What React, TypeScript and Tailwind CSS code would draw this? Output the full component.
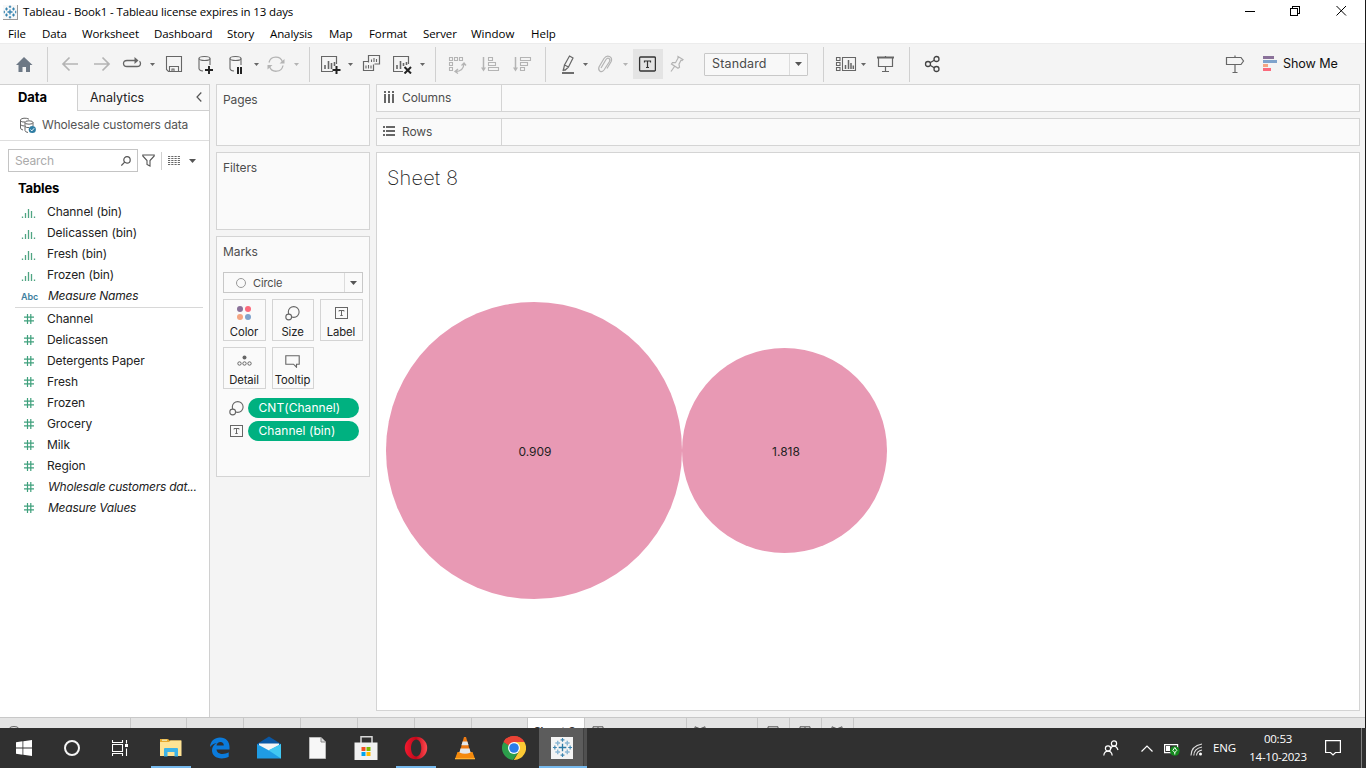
import React from "react";

type P = { children?: React.ReactNode; className?: string };

/* 20x20 stroke icon used throughout the toolbar */
function Ico({ children, className = "" }: P) {
  return (
    <svg viewBox="0 0 20 20" className={"h-5 w-5 shrink-0 " + className} fill="none" stroke="currentColor" strokeWidth="1.1">
      {children}
    </svg>
  );
}
function Caret({ className = "" }: P) {
  return (
    <svg viewBox="0 0 5 3" className={"h-[3px] w-[5px] shrink-0 " + className} fill="currentColor">
      <path d="M0 0h5L2.5 3z" />
    </svg>
  );
}
function Divider({ className = "" }: P) {
  return <div className={"h-[35px] w-px shrink-0 bg-[#d0d0d0] " + className} />;
}

const DIM = "text-[#b4b4b4]";

function TableauMark({ className = "" }: P) {
  return (
    <svg viewBox="0 0 22 22" className={className} fill="none" strokeWidth="1.2">
      <path d="M11 7v8M7 11h8" stroke="#2e7ba6" strokeWidth="1.4" />
      <path d="M6 3.800v5M3.500 6.300h5M16 3.800v5M13.500 6.300h5M6 13.200v5M3.500 15.700h5M16 13.200v5M13.500 15.700h5" stroke="#8ab6d3" strokeWidth="1.500" />
      <path d="M11 1v4M9 3h4M11 17v4M9 19h4M3 9v4M1 11h4M19 9v4M17 11h4" stroke="#3f86b0" />
    </svg>
  );
}

function TitleBar() {
  return (
    <div className="flex h-6 shrink-0 items-center bg-white font-['Open_Sans','Noto_Sans',sans-serif] text-[11.5px] text-black">
      <div className="ml-[3px] flex h-[15px] w-[15px] items-center justify-center border-b border-r border-[#999] bg-[#f8f8f8]">
        <svg viewBox="0 0 14 14" className="h-[14px] w-[14px]" fill="none" stroke="#3583b0" strokeWidth="1.1">
          <path d="M7 4.500v5M4.500 7h5" strokeWidth="1.300" />
          <path d="M3.500 2.500v3M2 4h3M10.500 2.500v3M9 4h3M3.500 8.500v3M2 10h3M10.500 8.500v3M9 10h3M7 .5v2.500M5.800 1.700h2.400M7 11v2.500M5.800 12.300h2.400M1.300 5.800v2.400M12.700 5.800v2.400" />
        </svg>
      </div>
      <span className="ml-[5px] whitespace-nowrap tracking-[-0.13px]">Tableau - Book1 - Tableau license expires in 13 days</span>
      <svg viewBox="0 0 102 12" className="ml-auto mr-[18px] mb-[3px] h-3 w-[102px]" fill="none" stroke="#000" shapeRendering="crispEdges">
        <path d="M0 6.500h10" />
        <path d="M45.500 3.500h7v7h-7zM47.500 3V1.500h7v7H53" />
        <path d="M91.500 1l9.500 9.500M101 1l-9.500 9.500" shapeRendering="auto" />
      </svg>
    </div>
  );
}

function Menu() {
  return (
    <div className="flex h-[19px] shrink-0 items-center whitespace-nowrap bg-white pl-2 font-['Open_Sans','Noto_Sans',sans-serif] text-[11.5px] tracking-[-0.1px] text-black">
      <span className="w-[34px]">File</span>
      <span className="w-[40px]">Data</span>
      <span className="w-[72px]">Worksheet</span>
      <span className="w-[73px]">Dashboard</span>
      <span className="w-[43px]">Story</span>
      <span className="w-[59px]">Analysis</span>
      <span className="w-[40px]">Map</span>
      <span className="w-[54px]">Format</span>
      <span className="w-[48px]">Server</span>
      <span className="w-[60px] tracking-[0px]">Window</span>
      <span className="tracking-[0px]">Help</span>
    </div>
  );
}

function Toolbar() {
  return (
    <div className="flex h-[41px] shrink-0 items-center border-t border-[#ececec] bg-[#f4f4f4] text-[#666]">
      <Ico className="ml-[14px] text-[#6d7885]">
        <path d="M10 3l8.500 8H16v7h-4v-5H8.500v5H4.500v-7H2z" fill="currentColor" stroke="none" />
      </Ico>
      <Divider className="ml-[13px]" />
      <Ico className="ml-3 text-[#b4b4b4]"><path d="M18 10H3M9.500 3.500L3 10 9.500 16.500" strokeWidth="1.700" /></Ico>
      <Ico className="ml-3 text-[#b4b4b4]"><path d="M2 10h15M10.500 3.500l6.500 6.500-6.500 6.500" strokeWidth="1.700" /></Ico>
      <Ico className="ml-[10px]">
        <path d="M15 6.500H5Q1.500 6.500 1.500 9.500T5 12.500h10q3.500 0 3.500-3 0-1.500-1-2.200" strokeWidth="1.300" />
        <path d="M12.500 3L16.500 6.500l-4 3.500z" fill="currentColor" stroke="none" />
      </Ico>
      <Caret className="ml-2" />
      <Ico className="ml-[9px]"><path d="M2.500 2.500h15v15H4.500l-2-2zM5.500 17.500v-5h9v5M8 17.500V15h2v2.500" /></Ico>
      <Ico className="ml-3">
        <ellipse cx="8.500" cy="4.500" rx="5.500" ry="2" />
        <path d="M3 4.500v10q0 2 4 2.500M14 4.500V11" />
        <path d="M13 12v8M9 16h8" stroke="#222" strokeWidth="1.900" />
      </Ico>
      <Ico className="ml-[11px]">
        <ellipse cx="8.500" cy="4.500" rx="5.500" ry="2" />
        <path d="M3 4.500v10q0 2 4 2.500M14 4.500V11" />
        <path d="M11 13v7M14 13v7" stroke="#222" strokeWidth="2" />
      </Ico>
      <Caret className="ml-[7px]" />
      <Ico className="ml-[7px] text-[#b4b4b4]">
        <path d="M3 8.500A7 7 0 0 1 16.500 8M17 11.500A7 7 0 0 1 3.500 12.500" strokeWidth="1.300" />
        <path d="M18.500 5v4.500h-5zM1.500 15.500V11h5z" fill="currentColor" stroke="none" />
      </Ico>
      <Caret className="ml-2 text-[#b4b4b4]" />
      <Divider className="ml-[10px]" />
      <Ico className="ml-[11px]">
        <path d="M15.500 10V2.500H.5v15H12" strokeWidth="1.200" />
        <path d="M4 15v-4M7.500 15V7M10.500 15V9M13.500 12V8" strokeWidth="1.600" />
        <path d="M15.500 12v8M11.500 16h8" stroke="#222" strokeWidth="2" />
      </Ico>
      <Caret className="ml-[7px]" />
      <Ico className="ml-2">
        <path d="M7.500 8.500V1.500h11v8.500h-5M7 7.500H2.500v9h10v-6" strokeWidth="1.200" />
        <path d="M10.500 8V5.500M13 8V4M15.500 8V5M5 14.500v-3M7.500 14.500V11M10 14.500v-3" />
      </Ico>
      <Ico className="ml-3">
        <path d="M15.500 10V2.500H.5v15H10" strokeWidth="1.200" />
        <path d="M4 15v-4M7.500 15V7M10.500 12V9M13.500 11V8" strokeWidth="1.600" />
        <path d="M11.500 13l6.500 6.500M18 13l-6.500 6.500" stroke="#222" strokeWidth="2" />
      </Ico>
      <Caret className="ml-[7px]" />
      <Divider className="ml-[10px]" />
      <Ico className={"ml-3 " + DIM}>
        <path d="M1.500 3.500h3v3h-3zM6.500 3.500h3v3h-3zM11.500 3.500h3v3h-3zM1.500 8.500h3v3h-3zM1.500 13.500h3v3h-3z" />
        <path d="M7.500 17.500q8 0 8.500-8M10 15l-3 2.500 3 2M13.500 11.500L16 9l2 2.500" strokeWidth="1.300" />
      </Ico>
      <Ico className={"ml-3 " + DIM}>
        <path d="M3.500 3v12" strokeWidth="1.500" />
        <path d="M1 13.500h5L3.500 17.500z" fill="currentColor" stroke="none" />
        <path d="M8.500 3.500h4v3h-4zM8.500 8.500h7v3h-7zM8.500 13.500h10v3h-10z" />
      </Ico>
      <Ico className={"ml-3 " + DIM}>
        <path d="M3.500 3v12" strokeWidth="1.500" />
        <path d="M1 13.500h5L3.500 17.500z" fill="currentColor" stroke="none" />
        <path d="M8.500 3.500h10v3h-10zM8.500 8.500h7v3h-7zM8.500 13.500h4v3h-4z" />
      </Ico>
      <Divider className="ml-[13px]" />
      <Ico className="ml-3">
        <path d="M11.500 2l3.500 2-4.500 9-4-2zM6.500 11L5.500 15.500 7 16.200 10.500 13M5.500 15l-.500 2" strokeWidth="1.200" />
        <path d="M4 19h12" strokeWidth="1.900" />
      </Ico>
      <Caret className="ml-[5px]" />
      <Ico className={"ml-[7px] " + DIM}>
        <path d="M6 14l5-8.500q1.500-2 3-1t.5 3L9 16q-2 2.500-4 1.200T4 13L9 4.500Q11.500 1 14.500 2.500t1.700 5L12 14.500" strokeWidth="1.200" />
      </Ico>
      <Caret className="ml-2 text-[#b4b4b4]" />
      <div className="ml-[5px] flex h-[30px] w-[30px] shrink-0 items-center justify-center bg-[#e4e4e4]">
        <svg viewBox="0 0 18 16" className="mr-[2px] h-4 w-[18px]" fill="none" stroke="#333">
          <rect x="1.600" y="1" width="15.800" height="14" rx="1" strokeWidth="1.300" />
          <path d="M6.500 6.500V5h6v1.500M9.500 5v6.500M8 11.500h3" strokeWidth="1.200" />
        </svg>
      </div>
      <Ico className={"ml-1 " + DIM}>
        <path d="M11 2.500l5 3-1 1-1-.3-2 4 .5 3-1.500 1L4.500 10l1-1.300 3 0 2.500-4.500zM7.500 12.500L4 17.500" strokeWidth="1.200" />
      </Ico>
      <div className="ml-[17px] flex h-[23px] w-[104px] shrink-0 items-center rounded-[1px] border border-[#c8c8c8] bg-[#f8f8f8]">
        <span className="w-[84px] pl-[7px] font-[Inter,sans-serif] text-[12.5px] tracking-[0.15px] text-[#4a4a4a]">Standard</span>
        <span className="flex h-full grow items-center justify-center border-l border-[#dcdcdc]">
          <svg viewBox="0 0 7 4" className="h-1 w-[7px]" fill="#555"><path d="M0 0h7L3.500 4z" /></svg>
        </span>
      </div>
      <Divider className="ml-[15px]" />
      <Ico className="ml-3 overflow-visible">
        <path d="M.5 3.500h3.500v3H.5zM.5 8.500h3.500v3H.5zM.5 13.500h3.500v3H.5zM6.500 3.500h13v13h-13z" />
        <path d="M9.500 15v-4M12.500 15V6M15 15V9M17.300 15v-3.500" strokeWidth="1.500" />
      </Ico>
      <Caret className="ml-[5px]" />
      <Ico className="ml-[10px]">
        <path d="M1 3.500h17" strokeWidth="2" />
        <path d="M2.500 4v8.500h14V4M9.500 2v1M9.500 12.500V17M6 17.500h7" strokeWidth="1.200" />
      </Ico>
      <Divider className="ml-[13px]" />
      <Ico className="ml-3 text-[#444]">
        <circle cx="6" cy="10" r="2.500" strokeWidth="1.300" />
        <circle cx="14.500" cy="5" r="2.500" strokeWidth="1.300" />
        <circle cx="14.500" cy="15" r="2.500" strokeWidth="1.300" />
        <path d="M8 8.800l4.300-2.500M8 11.200l4.300 2.500" strokeWidth="1.300" />
      </Ico>
      <Ico className="ml-auto">
        <path d="M1.500 3.500h14.500l2.500 3.500-2.500 3.500H1.500zM10 1.500v2M10 10.500V18M7.500 18.500h5" strokeWidth="1.200" />
      </Ico>
      <svg viewBox="0 0 14 15" className="mb-px ml-[18px] h-[15px] w-[14px]">
        <path d="M0 0h11v3H0z" fill="#8a7199" />
        <path d="M0 4h14v3H0z" fill="#7fa3cc" />
        <path d="M0 8h5v3H0z" fill="#f4a582" />
        <path d="M0 12h8v3H0z" fill="#fb6a7c" />
      </svg>
      <span className="ml-[6px] w-[54px] whitespace-nowrap font-[Inter,sans-serif] text-[12.6px] tracking-[-0.1px] text-[#111]">Show Me</span>
      <div className="w-[28px] shrink-0" />
    </div>
  );
}

const bins = ["Channel (bin)", "Delicassen (bin)", "Fresh (bin)", "Frozen (bin)"];
const measures = ["Channel", "Delicassen", "Detergents Paper", "Fresh", "Frozen", "Grocery", "Milk", "Region"];

function Field({ icon, label, italic }: { icon: React.ReactNode; label: string; italic?: boolean }) {
  return (
    <div className="flex h-[21px] items-center">
      <div className="flex w-[47px] shrink-0 items-center pl-[21px]">{icon}</div>
      <span className={"whitespace-nowrap pb-[2px] text-[12px] text-[#222] " + (italic ? "pl-px italic tracking-[-0.23px]" : "tracking-[-0.08px]")}>{label}</span>
    </div>
  );
}
const binIcon = (
  <svg viewBox="0 0 15 10" className="h-[10px] w-[15px]" stroke="#4fa583" strokeWidth="1.300">
    <path d="M1.500 10V8.500M4.500 10V5M7.500 10V1M10.500 10V3M13.500 10V8.500" />
  </svg>
);
const hashIcon = (
  <svg viewBox="0 0 10 10" className="mb-[2px] ml-[3px] h-[10px] w-[10px]" stroke="#3fa07c" strokeWidth="1.200">
    <path d="M3.500 0v10M6.800 0v10M0 3.200h10M0 6.800h10" />
  </svg>
);

function DataPane() {
  return (
    <div className="flex w-[210px] shrink-0 flex-col border-r border-t border-[#d0d0d0] bg-white">
      <div className="flex h-[26px] shrink-0 text-[13px]">
        <div className="w-[77px] pl-[18px] leading-[25px] font-bold tracking-[-0.1px] text-black">Data</div>
        <div className="flex grow items-center border-b border-l border-[#d0d0d0] bg-[#f9f9f9] pl-3 text-[12.5px] text-[#222]">
          <span className="pt-px">Analytics</span>
          <svg viewBox="0 0 6 10" className="mb-[2px] ml-auto mr-[7px] h-[10px] w-[6px]" fill="none" stroke="#555" strokeWidth="1.200"><path d="M5.300.5L1 5l4.300 4.500" /></svg>
        </div>
      </div>
      <div className="flex h-[30px] shrink-0 items-center border-b border-[#dedede] pl-[19px] text-[12px] text-[#555]">
        <svg viewBox="0 0 18 17" className="h-[17px] w-[18px]" fill="none" stroke="#666">
          <path d="M10 2.200Q8 1 5 1.200 1.500 1.500 1.500 3v8q0 1.500 2.500 2M1.500 3.500Q2 5.500 6 5M1.500 7.500q1 1.500 4 1.500" />
          <ellipse cx="10" cy="5.500" rx="4" ry="1.700" />
          <path d="M6 5.500v8q0 1.500 3 2M14 5.500V9M6 9.500q1.500 1.500 4 1" />
          <circle cx="13.300" cy="12.500" r="3.600" fill="#2f7da3" stroke="none" />
          <path d="M11.500 12.500l1.300 1.400 2.300-2.600" stroke="#fff" />
        </svg>
        <span className="mb-px ml-[5px] whitespace-nowrap tracking-[-0.170px]">Wholesale customers data</span>
      </div>
      <div className="mt-2 flex h-[23px] shrink-0 items-center pl-2">
        <div className="flex h-[23px] w-[130px] items-center border border-[#c4c4c4] pl-[6px] text-[12px] tracking-[-0.150px] text-[#aaa]">
          Search
          <svg viewBox="0 0 10 10" className="ml-auto mr-[6px] h-[10px] w-[10px]" fill="none" stroke="#555" strokeWidth="1.200"><circle cx="6" cy="3.900" r="3.200" /><path d="M3.700 6.200L.3 9.600" /></svg>
        </div>
        <svg viewBox="0 0 13 13" className="ml-[4px] h-[13px] w-[13px]" fill="none" stroke="#555" strokeWidth="1.100"><path d="M.8 1h11.400v1L8 6.500V12l-3-1.500v-4L.8 2z" /></svg>
        <div className="ml-[6px] h-[18px] w-px bg-[#d0d0d0]" />
        <svg viewBox="0 0 12 10" className="ml-[6px] h-[10px] w-3" stroke="#666"><path d="M0 .5h12M0 2.500h12M0 4.500h12M0 6.500h12M0 8.500h12" strokeDasharray="2.200 1.050" /></svg>
        <svg viewBox="0 0 7 4" className="ml-[9px] h-1 w-[7px]" fill="#555"><path d="M0 0h7L3.500 4z" /></svg>
      </div>
      <div className="mt-[6px] h-[24px] shrink-0 pl-[18px] text-[13px] font-bold leading-[21px] tracking-[-0.150px] text-black">Tables</div>
      <div className="flex flex-col">
        {bins.map((b) => <Field key={b} label={b} icon={binIcon} />)}
        <Field italic label="Measure Names" icon={<span className="text-[9px] font-semibold tracking-[-0.1px] text-[#3f7fa0]">Abc</span>} />
        <div className="ml-[15px] mr-[6px] mb-px h-px shrink-0 bg-[#d8d8d8]" />
        {measures.map((m) => <Field key={m} label={m} icon={hashIcon} />)}
        <Field italic label="Wholesale customers dat..." icon={hashIcon} />
        <Field italic label="Measure Values" icon={hashIcon} />
      </div>
    </div>
  );
}

const CARD = "border border-[#d4d4d4] bg-[#fafafa] ";

function SizeIcon() {
  return (
    <svg viewBox="0 0 15 15" className="h-[15px] w-[15px]" fill="none" stroke="#666" strokeWidth="1.100">
      <circle cx="8.700" cy="6" r="5.400" />
      <circle cx="3.700" cy="11" r="2.900" fill="#fafafa" />
    </svg>
  );
}
function LabelIcon() {
  return (
    <svg viewBox="0 0 13 12" className="h-3 w-[13px]" fill="none" stroke="#666">
      <rect x=".5" y=".5" width="12" height="11" />
      <path d="M4 4.500v-1h5v1M6.500 3.500v5M5.300 8.500h2.400" />
    </svg>
  );
}
function MarkButton({ label, w, children }: { label: string; w: string; children: React.ReactNode }) {
  return (
    <div className={"flex h-[42px] flex-col items-center border border-[#d4d4d4] bg-[#fafafa] pr-px " + w}>
      <div className="flex h-[26px] items-center">{children}</div>
      <span className="whitespace-nowrap text-[11.300px] leading-[13px] tracking-[-0.1px] text-[#222]">{label}</span>
    </div>
  );
}
function Pill({ children }: P) {
  return <div className="ml-[4px] h-5 w-[111px] whitespace-nowrap rounded-full bg-[#00b180] pl-[10.500px] text-[12px] leading-5 tracking-[0.05px] text-white">{children}</div>;
}

function Cards() {
  return (
    <div className="flex w-[154px] shrink-0 flex-col gap-[6px] text-[12px] tracking-[-0.1px] text-[#4d4d4d]">
      <div className={CARD + "h-[62px] pl-[6px] pt-[7px] leading-4"}>Pages</div>
      <div className={CARD + "h-[78px] pl-[6px] pt-[7px] leading-4"}>Filters</div>
      <div className={CARD + "h-[241px] pl-[6px] pt-[7px] leading-4"}>
        Marks
        <div className="mt-[12px] flex h-[21px] w-[140px] items-center border border-[#c8c8c8] text-[11px]">
          <div className="ml-[12px] h-[10px] w-[10px] rounded-full border-[1.500px] border-[#999]" />
          <span className="ml-[7px]">Circle</span>
          <span className="ml-auto flex h-full w-[18px] items-center justify-center border-l border-[#dcdcdc]">
            <svg viewBox="0 0 7 4" className="h-1 w-[7px]" fill="#555"><path d="M0 0h7L3.500 4z" /></svg>
          </span>
        </div>
        <div className="mt-[6px] flex gap-[6px]">
          <MarkButton label="Color" w="w-[43px]">
            <div className="grid grid-cols-2 gap-[2px]">
              <i className="h-[6px] w-[6px] rounded-full bg-[#8a7199]" />
              <i className="h-[6px] w-[6px] rounded-full bg-[#fb6a7c]" />
              <i className="h-[6px] w-[6px] rounded-full bg-[#f4a582]" />
              <i className="h-[6px] w-[6px] rounded-full bg-[#7fa3cc]" />
            </div>
          </MarkButton>
          <MarkButton label="Size" w="w-[42px]"><SizeIcon /></MarkButton>
          <MarkButton label="Label" w="w-[43px]"><LabelIcon /></MarkButton>
        </div>
        <div className="mt-[6px] flex gap-[6px]">
          <MarkButton label="Detail" w="w-[43px]">
            <svg viewBox="0 0 15 12" className="h-3 w-[15px]" fill="none" stroke="#666">
              <circle cx="7.500" cy="2.500" r="2" fill="#666" stroke="none" />
              <circle cx="2.500" cy="8.500" r="1.700" /><circle cx="7.500" cy="8.500" r="1.700" /><circle cx="12.500" cy="8.500" r="1.700" />
            </svg>
          </MarkButton>
          <MarkButton label="Tooltip" w="w-[42px]">
            <svg viewBox="0 0 15 13" className="mt-px h-[13px] w-[15px]" fill="none" stroke="#666" strokeWidth="1.100"><path d="M.8.7h13.400v8.500H11.500v3L8.500 9.200H.8z" /></svg>
          </MarkButton>
        </div>
        <div className="mt-[9px] flex items-center pl-[6px]"><SizeIcon /><Pill>CNT(Channel)</Pill></div>
        <div className="mt-[3px] flex items-center pl-[7px]"><LabelIcon /><div className="w-px" /><Pill>Channel (bin)</Pill></div>
      </div>
    </div>
  );
}

function Shelf({ label, icon }: { label: string; icon: React.ReactNode }) {
  return (
    <div className={CARD + "flex h-7 shrink-0 text-[12px] tracking-[-0.1px] text-[#4d4d4d]"}>
      <div className="flex w-[125px] items-center border-r border-[#d4d4d4] pl-[6px]">
        {icon}
        <span className="ml-[7px]">{label}</span>
      </div>
    </div>
  );
}

function Worksheet() {
  return (
    <div className="flex grow flex-col gap-[6px]">
      <Shelf label="Columns" icon={<svg viewBox="0 0 12 12" className="mb-[2px] h-3 w-3" fill="#666"><path d="M1 0h2v2H1zM5 0h2v2H5zM9 0h2v2H9zM1 3h2v9H1zM5 3h2v9H5zM9 3h2v9H9z" /></svg>} />
      <Shelf label="Rows" icon={<svg viewBox="0 0 12 12" className="mb-[2px] h-3 w-3" fill="#666"><path d="M0 1h2v2H0zM0 5h2v2H0zM0 9h2v2H0zM3 1h9v2H3zM3 5h9v2H3zM3 9h9v2H3z" /></svg>} />
      <div className="h-[559px] border border-[#d4d4d4] bg-white">
        <div className="pl-[10px] pt-[11px] text-[20px] font-extralight leading-7 tracking-[0.150px] text-[#222]">Sheet 8</div>
        <div className="mt-[110px] flex items-center pl-[9px] text-[12px] text-[#222]">
          <div className="flex h-[297px] w-[296px] items-center justify-center rounded-full bg-[#e899b4] pl-[2px] pt-[2px]">0.909</div>
          <div className="flex h-[205px] w-[205px] items-center justify-center rounded-full bg-[#e899b4] pl-[3px] pt-[2px]">1.818</div>
        </div>
      </div>
    </div>
  );
}

function SheetTabs() {
  const c = "h-full shrink-0 overflow-hidden border-r border-[#c8c8c8] ";
  const ic = "mt-[8px] h-[12px] w-[12px]";
  return (
    <div className="flex h-[11px] shrink-0 overflow-hidden border-t border-[#c8c8c8] bg-[#e4e4e4] text-[#555]">
      <div className={c + "w-[131px] pl-2"}><svg viewBox="0 0 12 12" className={ic} fill="none" stroke="#666"><ellipse cx="6" cy="2.500" rx="4.500" ry="2" /></svg></div>
      <div className={c + "w-[56px]"} />
      <div className={c + "w-[57px]"} />
      <div className={c + "w-[57px]"} />
      <div className={c + "w-[57px]"} />
      <div className={c + "w-[57px]"} />
      <div className={c + "w-[57px]"} />
      <div className={c + "w-[56px]"} />
      <div className={c + "w-[57px] whitespace-nowrap bg-white pl-[6px] pt-[6px] text-[11.500px] font-semibold leading-[14px] text-[#333]"}>Sheet 8</div>
      <div className={c + "w-[102px] pl-[7px]"}><svg viewBox="0 0 12 12" className={ic} fill="none" stroke="#555"><path d="M1 .8h10v9H1zM6 1v8" /></svg></div>
      <div className={c + "w-[71px] pl-[7px]"}><svg viewBox="0 0 12 12" className={ic} fill="none" stroke="#555"><path d="M1 .8l5 2 5-2v9H1z" /></svg></div>
      <div className={c + "w-[32px] pl-[9px]"}><svg viewBox="0 0 12 12" className={ic} fill="none" stroke="#555"><path d="M1 .8h10v9H1z" /></svg></div>
      <div className={c + "w-[32px] pl-[9px]"}><svg viewBox="0 0 12 12" className={ic} fill="none" stroke="#555"><path d="M1 .8h10v9H1zM6 1v8" /></svg></div>
      <div className={c + "w-[32px] pl-[9px]"}><svg viewBox="0 0 12 12" className={ic} fill="none" stroke="#555"><path d="M1 .8l5 2 5-2v9H1z" /></svg></div>
    </div>
  );
}

function App49({ children, on }: { children: React.ReactNode; on?: boolean }) {
  return (
    <div className="flex h-10 w-[49px] shrink-0 flex-col items-center">
      <div className="flex h-[38px] items-center pt-px">{children}</div>
      <div className={"h-[2px] w-10 " + (on ? "bg-[#76b9ed]" : "")} />
    </div>
  );
}

function Taskbar() {
  const s = "h-6 w-6";
  return (
    <div className="flex h-10 shrink-0 items-center bg-[#303030] text-white">
      <div className="flex w-12 justify-center"><svg viewBox="0 0 16 16" className="h-4 w-4" fill="#fff"><path d="M0 2.200L6.500 1.300v6.300H0zM7.300 1.200L16 0v7.600H7.300zM0 8.400h6.500v6.300L0 13.800zM7.300 8.400H16V16l-8.700-1.200z" /></svg></div>
      <div className="flex w-12 justify-center"><div className="h-4 w-4 rounded-full border-2 border-[#f4f4f4]" /></div>
      <div className="mr-[2px] flex w-12 justify-center">
        <svg viewBox="0 0 16 16" className="h-4 w-4" fill="none" stroke="#fff" strokeWidth="1.100"><path d="M.5 0v2.500h10V0M.5 16v-2.500h10V16M.5 4.500h10v7H.5zM14.500 0v3.500M14.500 8.500V16" /><path d="M13 4h3v3h-3z" fill="#fff" stroke="none" /></svg>
      </div>
      <App49 on>
        <svg viewBox="0 0 22 19" className="h-[19px] w-[22px]">
          <path d="M0 1h8l1.500 1.500H21V7H0z" fill="#e8a92f" /><path d="M2 1.600h5v1.200H2z" fill="#e9f0c8" />
          <path d="M0 4h9l1.500-1.500H21.500V18H0z" fill="#ffe394" />
          <path d="M4 18.500V11q0-1 1-1h12q1 0 1 1v7.500h-3.500V14h-7v4.500z" fill="#3db3e8" />
        </svg>
      </App49>
      <App49>
        <svg viewBox="0 0 22 24" className="h-6 w-[22px]">
          <path d="M1 11C1.500 5 5.500 1.500 11 1.500c6 0 9.500 4 9.500 9.500v2.500H7.500c.3 3 3 4.500 6 4.500 2.300 0 4.300-.6 6.200-1.700v4.500c-2 1.200-4.500 1.700-7 1.700C7 22.500 3 19.300 3 14.300c0-3.300 1.800-6 4.800-7.300C5 7.300 2.800 8.600 1 11zm6.500-1.500h7.300c0-2.300-1.200-3.600-3.400-3.600-2.100 0-3.500 1.400-3.900 3.600z" fill="#0b7bdb" />
        </svg>
      </App49>
      <App49>
        <svg viewBox="0 0 24 23" className="h-[23px] w-6">
          <path d="M0 8L12 .5 24 8v4H0z" fill="#0a57a4" /><path d="M2 7.500h20v9H2z" fill="#f5f5f5" />
          <path d="M0 8l12 6.500L24 8v14.500H0z" fill="#1f9ce4" /><path d="M24 8v14.500L11.500 14.300z" fill="#41c8f3" />
        </svg>
      </App49>
      <App49>
        <svg viewBox="0 0 17 22" className="h-[22px] w-[17px]"><path d="M.5.5h11.500l4.500 4.500v16.500H.5z" fill="#f7f7f7" stroke="#bbb" /><path d="M12 .5V5h4.500" fill="#ddd" stroke="#888" /></svg>
      </App49>
      <App49>
        <svg viewBox="0 0 24 26" className="mr-px h-[26px] w-6">
          <path d="M7 8V1.800h11V8" fill="none" stroke="#d8d8d8" strokeWidth="1.500" /><path d="M.5 7.500h23V25H.5z" fill="#f1f1f1" />
          <path d="M7.500 12h4v4h-4z" fill="#f25022" /><path d="M12.500 12h4v4h-4z" fill="#7fba00" /><path d="M7.500 17h4v4h-4z" fill="#00a4ef" /><path d="M12.500 17h4v4h-4z" fill="#ffb900" />
        </svg>
      </App49>
      <App49 on>
        <svg viewBox="0 0 24 24" className={s}>
          <defs><linearGradient id="op" x1="0" x2="1"><stop offset="0" stopColor="#f21a2f" /><stop offset=".5" stopColor="#c4081a" /><stop offset="1" stopColor="#ff4b50" /></linearGradient></defs>
          <path fillRule="evenodd" d="M12 .8a11.200 11.200 0 1 0 0 22.400 11.200 11.200 0 1 0 0-22.400zM12.300 3.500c3 0 5 3.800 5 8.500s-2 8.500-5 8.500-5.300-3.800-5.300-8.500 2.300-8.500 5.300-8.500z" fill="url(#op)" />
        </svg>
      </App49>
      <App49>
        <svg viewBox="0 0 20 24" className="h-6 w-5">
          <path d="M2.500 16h15l2.500 7H0z" fill="#f58a0c" /><path d="M0 22h20v1.300H0z" fill="#ffb02e" />
          <path d="M9 1h2l4.500 15.500q-5.500 3-11 0z" fill="#ee7a12" /><path d="M7.600 5.500h4.800l1.200 3.800H6.400zM5.500 12.500h9l1.100 4q-5.600 2.500-11.200 0z" fill="#e4e8ea" />
        </svg>
      </App49>
      <App49>
        <svg viewBox="0 0 24 24" className={s}>
          <path d="M12 12L1.600 6A12 12 0 0 1 22.400 6z" fill="#ea4335" /><path d="M12 12L1.600 6A12 12 0 0 0 11 24l6.200-9z" fill="#2c9e4b" />
          <path d="M12 6h10.400A12 12 0 0 1 11.800 24l5.400-9z" fill="#fcc934" /><path d="M1.600 6A12 12 0 0 1 22.400 6H12L7 9.500z" fill="#ea4335" />
          <circle cx="12" cy="12" r="6" fill="#fff" /><circle cx="12" cy="12" r="4.800" fill="#2b7de9" />
        </svg>
      </App49>
      <div className="ml-px flex h-10 w-12 flex-col">
        <div className="flex h-[38px]">
          <div className="flex w-11 items-center justify-center bg-[#5c5c5c] pl-[2px] pt-px">
            <div className="flex h-[22px] w-[22px] items-center justify-center bg-[#f4f4f4]"><TableauMark className="h-[21px] w-[21px]" /></div>
          </div>
          <div className="w-px bg-[#404040]" />
          <div className="w-[3px] bg-[#505050]" />
        </div>
        <div className="h-[2px] bg-[#76b9ed]" />
      </div>
      <div className="ml-auto flex items-center font-['Open_Sans','Noto_Sans',sans-serif] text-[11.500px]">
        <svg viewBox="0 0 16 16" className="h-4 w-4" fill="none" stroke="#fff" strokeWidth="1.200"><circle cx="11" cy="3.500" r="2.600" /><path d="M7.500 9Q8.500 6.200 11 6.200T15 10" /><circle cx="5" cy="8.500" r="2.600" /><path d="M.8 15.500q.5-4.300 4.200-4.300t4.200 4.300" /></svg>
        <svg viewBox="0 0 12 7" className="ml-[22px] h-[7px] w-3" fill="none" stroke="#fff" strokeWidth="1.200"><path d="M.5 6.500L6 1l5.500 5.500" /></svg>
        <svg viewBox="0 0 16 13" className="ml-[11px] mt-[3px] h-[13px] w-4"><path d="M.6 1.600h13v8H.6z" fill="none" stroke="#fff" strokeWidth="1.200" /><path d="M2 3h4v5H2z" fill="#fff" /><circle cx="10.800" cy="8" r="4.800" fill="#138a1c" /><path d="M10.800 4.500l2 3-2 2-2-2zM10.800 9v2.500" fill="none" stroke="#fff" /></svg>
        <svg viewBox="0 0 13 13" className="ml-[10px] mt-[3px] h-[13px] w-[13px]" fill="none" stroke="#ddd" strokeWidth="1.100"><path d="M1 12.500Q1 3 12 1M3.800 12.500Q4 5.500 12 4M6.500 12.500q.3-4.500 5.500-5.500" /><circle cx="10.500" cy="11" r="1.500" fill="#fff" stroke="none" /></svg>
        <span className="ml-[10px] w-[24px] tracking-[-0.200px]">ENG</span>
        <div className="ml-[10px] w-[62px] whitespace-nowrap text-center leading-[18px] tracking-[-0.250px]"><div>00:53</div><div>14-10-2023</div></div>
        <svg viewBox="0 0 16 16" className="ml-[16px] h-4 w-4" fill="none" stroke="#fff" strokeWidth="1.200"><path d="M.6.6h14.800v11.900H10.500L8 15l-2.500-2.500H.6z" /></svg>
        <div className="ml-5 mr-1 h-10 w-px bg-[#808080]" />
      </div>
    </div>
  );
}

export default function App() {
  return (
    <div className="flex h-[768px] w-[1366px] flex-col overflow-hidden bg-[#f4f4f4]">
      <div className="flex h-[728px] shrink-0 flex-col border-r border-[#1a1a1a]">
        <TitleBar />
        <Menu />
        <Toolbar />
        <div className="flex h-[633px] shrink-0 font-[Inter,sans-serif] font-[370]">
          <DataPane />
          <div className="flex grow gap-[6px] pl-[6px] pr-[5px]">
            <Cards />
            <Worksheet />
          </div>
        </div>
        <SheetTabs />
      </div>
      <Taskbar />
    </div>
  );
}
